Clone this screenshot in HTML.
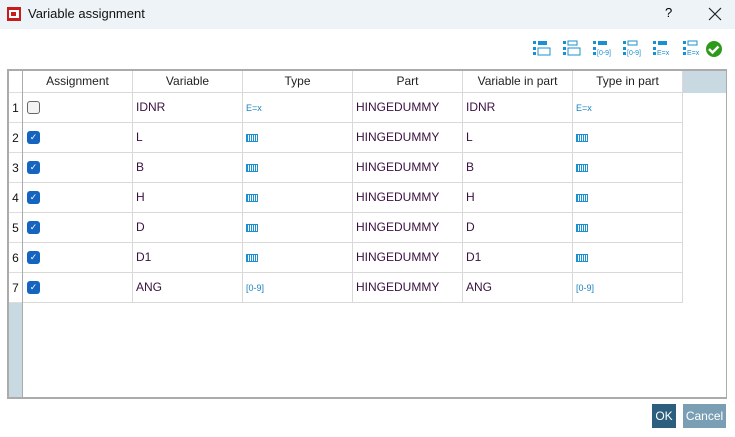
<!DOCTYPE html><html><head><style>
body{margin:0;width:735px;height:437px;background:#fff;font-family:"Liberation Sans",sans-serif;font-size:12px;position:relative;overflow:hidden}
.a{position:absolute}
.title{left:0;top:0;width:735px;height:29px;background:#eef3f8}
.grid{left:7px;top:69px;width:717px;height:326px;border:2px solid #ababab;border-right-width:1px;border-bottom-width:2px}
.rn{left:0;top:0;width:13px;height:326px;background:#c9d9e1;border-right:1px solid #ababab}
.cell{position:absolute;box-sizing:border-box;border-right:1px solid #d9d9d9;border-bottom:1px solid #d9d9d9;height:30px;line-height:29px;padding-left:3px;color:#3a1040}
.hd{text-align:center;padding:0;height:22px;line-height:21px;color:#222}
.num{position:absolute;left:0;width:13px;height:30px;line-height:30px;text-align:center;background:#fff;color:#111;border-bottom:1px solid #ddd;box-sizing:border-box}
.cb{position:absolute;left:4px;top:8px;width:13px;height:13px;border-radius:3px;background:#1565c0;color:#fff;font-size:9px;line-height:13px;text-align:center}
.cb.off{background:#f3f3f3;border:1px solid #666;width:11px;height:11px}
.kb{display:inline-block;width:12px;height:8px;border:1px solid #1a90d0;box-sizing:border-box;background:repeating-linear-gradient(90deg,#1a90d0 0 1px,#fff 1px 2px);vertical-align:middle}
.ic{color:#1a80c0;font-size:9px}
</style></head><body>
<div class="a title"></div>
<div class="a" style="left:7px;top:7px;width:14px;height:14px;background:#c81c1c"><div style="position:absolute;left:2px;top:3px;width:10px;height:8px;background:#fff"></div><div style="position:absolute;left:4px;top:5px;width:5px;height:4px;background:#c81c1c"></div></div>
<div class="a" style="left:28px;top:6px;font-size:13px;color:#111">Variable assignment</div>
<div class="a" style="left:665px;top:5px;font-size:13px">?</div>
<svg class="a" style="left:708px;top:7px" width="14" height="14"><path d="M1 1L13 13M13 1L1 13" stroke="#222" stroke-width="1.2"/></svg>
<svg class="a" style="left:530px;top:38px" width="200" height="24">
<g fill="#1a90d0">
<rect x="3" y="3" width="3" height="3"/><rect x="8" y="3" width="9" height="4"/><rect x="3" y="9" width="3" height="3"/><rect x="3" y="14" width="3" height="3"/><rect x="8" y="10" width="12" height="7" fill="none" stroke="#1a90d0"/>
<rect x="33" y="3" width="3" height="3"/><rect x="38" y="3" width="9" height="4" fill="none" stroke="#1a90d0"/><rect x="33" y="9" width="3" height="3"/><rect x="33" y="14" width="3" height="3"/><rect x="38" y="10" width="12" height="7" fill="none" stroke="#1a90d0"/>
<rect x="63" y="3" width="3" height="3"/><rect x="68" y="3" width="9" height="4"/><rect x="63" y="9" width="3" height="3"/><rect x="63" y="14" width="3" height="3"/><text x="67" y="17" font-size="7" font-family="Liberation Sans">[0-9]</text>
<rect x="93" y="3" width="3" height="3"/><rect x="98" y="3" width="9" height="4" fill="none" stroke="#1a90d0"/><rect x="93" y="9" width="3" height="3"/><rect x="93" y="14" width="3" height="3"/><text x="97" y="17" font-size="7" font-family="Liberation Sans">[0-9]</text>
<rect x="123" y="3" width="3" height="3"/><rect x="128" y="3" width="9" height="4"/><rect x="123" y="9" width="3" height="3"/><rect x="123" y="14" width="3" height="3"/><text x="127" y="17" font-size="7" font-family="Liberation Sans">E=x</text>
<rect x="153" y="3" width="3" height="3"/><rect x="158" y="3" width="9" height="4" fill="none" stroke="#1a90d0"/><rect x="153" y="9" width="3" height="3"/><rect x="153" y="14" width="3" height="3"/><text x="157" y="17" font-size="7" font-family="Liberation Sans">E=x</text>
</g>
<circle cx="184" cy="11" r="8" fill="#2e9a1c"/><path d="M179 11l3.5 3.5 6-6" stroke="#fff" stroke-width="2.5" fill="none"/>
</svg>
<div class="a grid">
<div class="a rn"></div>
<div class="a" style="left:0;top:0;width:13px;height:21px;background:#fff;border-bottom:1px solid #ddd"></div>
<div class="a" style="left:674px;top:0;width:43px;height:22px;background:#c9d9e1"></div>
<div id="g"></div>
</div>
<div class="a" style="left:652px;top:404px;width:24px;height:24px;background:#2c5e7e;color:#fff;line-height:24px;text-align:center">OK</div>
<div class="a" style="left:683px;top:404px;width:43px;height:24px;background:#7a9fb5;color:#fff;line-height:24px;text-align:center">Cancel</div>
<script>
var h=["Assignment","Variable","Type","Part","Variable in part","Type in part"];
var v=["IDNR","L","B","H","D","D1","ANG"];
var g="";for(var i=0;i<6;i++)g+='<div class="cell hd" style="left:'+(14+i*110)+'px;top:0;width:110px">'+h[i]+'</div>';
for(var r=0;r<7;r++){var t=22+r*30;
var ty=r==0?'<span class="ic">E=x</span>':r==6?'<span class="ic">[0-9]</span>':'<span class="kb"></span>';
g+='<div class="num" style="top:'+t+'px">'+(r+1)+'</div>';
var c=[ r==0?'<span class="cb off"></span>':'<span class="cb">✓</span>',v[r],ty,"HINGEDUMMY",v[r],ty];
for(var i=0;i<6;i++)g+='<div class="cell" style="left:'+(14+i*110)+'px;top:'+t+'px;width:110px">'+c[i]+'</div>';}
document.getElementById("g").innerHTML=g;
</script>
</body></html>
